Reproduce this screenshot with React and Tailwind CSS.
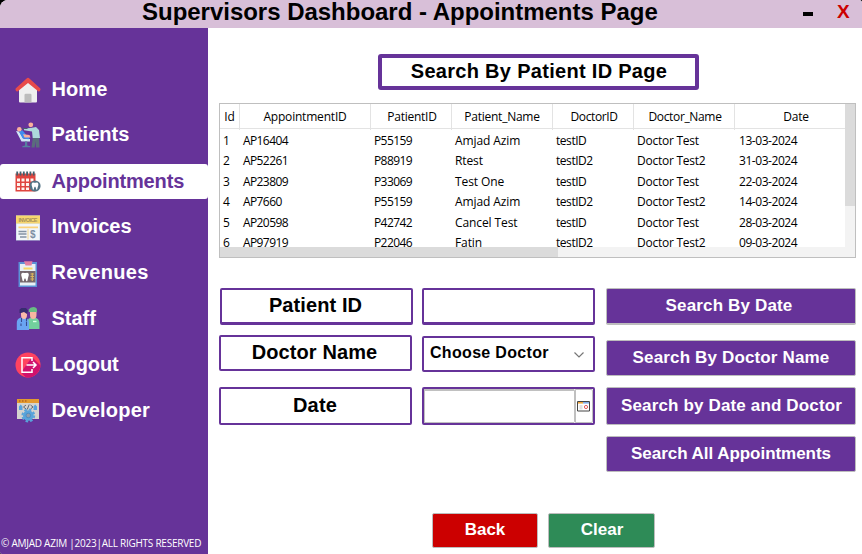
import React from "react";

const HomeIcon = () => (
  <svg viewBox="0 0 26 26" className="h-[26px] w-[26px]">
    <path d="M4 12 13 4l9 8v12.500a1 1 0 0 1-1 1H5a1 1 0 0 1-1-1z" fill="#efefef" />
    <path d="M9.500 25.500V18a1.300 1.300 0 0 1 1.300-1.300h4.400A1.300 1.300 0 0 1 16.500 18v7.500z" fill="#bcbcbc" />
    <path d="M13 .8a2 2 0 0 1 1.400.6l10.700 9.800c1 1-.2 3.800-1.600 3.200L13 6 2.500 14.400C1.100 15-.2 12.200.9 11.200L11.600 1.400A2 2 0 0 1 13 .8z" fill="#e84a4a" />
  </svg>
);

const PatientsIcon = () => (
  <svg viewBox="0 0 26 26" className="h-[26px] w-[26px]">
    <path d="M18 14h6l.5 11.500H21l-.5-6.500-.8 6.500H16.500z" fill="#5a6c7d" />
    <path d="M15.500 6 21 5l3 3 1 8h-7.300L17 9.500l-8-1.200V6.600z" fill="#add8dc" />
    <circle cx="15.800" cy="2.800" r="2.400" fill="#fbb09c" />
    <path d="m1 9 3 .5 4.500 7.200 6.500.3v2.500H6.500z" fill="#cfe8f6" />
    <path d="M4 9.500 7.500 8.300l4 5 3.500 2.500-1.500 1.500-6-1z" fill="#3e8ef0" />
    <path d="m8 12.300 6.500.8 1 2.300-6 .2z" fill="#fbb09c" />
    <circle cx="4.300" cy="7.300" r="2.300" fill="#fbb09c" />
    <path d="M10 19.500h2.200v4l3 .8v1H7.300v-1l2.700-.8z" fill="#56809f" />
    <path d="M7.500 6.500h5" stroke="#48606e" strokeWidth="1" />
  </svg>
);

const AppointmentsIcon = () => (
  <svg viewBox="0 0 26 26" className="h-[26px] w-[26px]">
    <path d="M.5 5.500h20v18H.500z" fill="#e0453f" />
    <path d="M2 10.500h3v3H2zm4.500 0h3v3h-3zm4.500 0h3v3h-3zm4.500 0h3v3h-3zM2 15h3v3H2zm4.500 0h3v3h-3zm4.500 0h3v3h-3zM2 19.500h3v2.500H2zm4.500 0h3v2.500h-3zm4.500 0h3v2.500h-3z" fill="#fff4ef" />
    <path d="M2.200 3.500v4M5.500 3.500v4M8.800 3.500v4M12.100 3.500v4M15.400 3.500v4M18.700 3.500v4" stroke="#41616f" strokeWidth="1.800" />
    <circle cx="20" cy="18" r="5.600" fill="#527384" />
    <path d="M16.800 15.500c.8-1.800 2.200-.8 3.200-.7 1-.1 2.400-1.100 3.200.7.700 1.800-.6 3.200-.8 5-.2 1.800-1.100 1.700-1.400 0-.2-1.200-.5-1.700-1-1.700s-.8.500-1 1.700c-.3 1.700-1.200 1.800-1.400 0-.2-1.800-1.500-3.200-.8-5z" fill="#fff" />
  </svg>
);

const InvoiceIcon = () => (
  <svg viewBox="0 0 26 26" className="h-[26px] w-[26px]">
    <path d="M1 .5h24v25H1z" fill="#bfd3e6" />
    <path d="M1.500 8.500h23V25h-23z" fill="#f2f6f9" />
    <path d="M1 .5h24v8H1z" fill="#f7d66f" />
    <text x="13" y="6.800" textAnchor="middle" textLength="19" className="fill-[#a79259] font-['Liberation_Sans'] text-[5.500px] font-bold">INVOICE</text>
    <path d="M3.500 11.500h19.500v1.800H3.500z" fill="#fbd27a" />
    <path d="M3.500 16.500h8M3.500 19h8M5 22h6.500" stroke="#8393a3" strokeWidth="1.300" />
    <path d="M13 14v10.500" stroke="#f2d68b" strokeWidth="1" />
    <text x="17.800" y="22.500" textAnchor="middle" className="fill-[#7c8fa3] font-['Liberation_Sans'] text-[10px]">$</text>
  </svg>
);

const RevenuesIcon = () => (
  <svg viewBox="0 0 26 26" className="h-[26px] w-[26px]">
    <path d="M3.500 1h18.500v25H3.500z" fill="#5b91d6" />
    <path d="M5 3h15.500v21.500H5z" fill="#e9f0f5" />
    <path d="M9 .3h8.500L16.500 4.500h-6z" fill="#e27ea2" />
    <path d="M8.500 6.500h9v2h-9z" fill="#f8d764" />
    <path d="M5 10h15.500v11.500H5z" fill="#75676d" />
    <path d="M6.500 12.500c1-1.500 2.500-.5 3.500-.5s2.500-1 3.500.5-.5 3.500-.7 5.500c-.3 2.900-1.600 2.900-1.900 1-.2-1.200-.4-1.600-.9-1.600s-.7.400-.9 1.600c-.3 1.900-1.600 1.900-1.900-1-.2-2-1.600-4-.7-5.500z" fill="#fff" />
    <path d="M15.500 13h3.500M15.500 15.500h3.500M15.500 18h3.500M17.300 12v8" stroke="#d9b35d" strokeWidth="1.200" />
  </svg>
);

const StaffIcon = () => (
  <svg viewBox="0 0 26 26" className="h-[26px] w-[26px]">
    <path d="M13 13.500c1-1.500 3-2 5-2 4 0 6.500 2 6.500 6V23H13z" fill="#72cf9d" />
    <path d="M15 4.500h6.500V9q0 4-3.300 4T15 9z" fill="#f6b6a0" />
    <path d="M13.800 6V3.500Q15 1 18.300 1T22 3.500V6z" fill="#68bd83" />
    <path d="M1.800 24v-7c0-4 2.500-5.500 6-5.500s6.200 1.500 6.200 5.500v7z" fill="#6aa5f3" />
    <path d="M6 5h6v4q0 4-3 4t-3-4z" fill="#fbbbaa" />
    <path d="M4.500 7V3.500L6.500 2H11l2 2.500-1 3.500-3-2-3 1z" fill="#382c70" />
    <path d="M6.500 12v4m5-4v3.500M6 17.500V20m5.500-4v4" stroke="#394b91" strokeWidth="1.100" />
    <path d="M18 15.500h3.500" stroke="#d9ffe6" strokeWidth="1.400" />
  </svg>
);

const LogoutIcon = () => (
  <svg viewBox="0 0 26 26" className="h-[26px] w-[26px]">
    <circle cx="13" cy="13" r="12.500" fill="#ff4360" />
    <path d="m6 20.500 5 5c7 1 14-4.500 14.500-12L17 5z" fill="#d0126d" />
    <path d="M17 9V5.800H7v14.400h10V17M11.500 13h9.500m-3-3 3 3-3 3" fill="none" stroke="#fff" strokeWidth="1.500" />
  </svg>
);

const DeveloperIcon = () => (
  <svg viewBox="0 0 26 26" className="h-[26px] w-[26px]">
    <path d="M2 1h22v20H2z" fill="#d4d3cf" />
    <path d="M2 1h22v4H2z" fill="#e39a2f" />
    <path d="M4 3h1.500m1.500 0h1.500M10 3h1.500" stroke="#9b4b1d" />
    <path d="m11 7-2.500 2L11 11m4.500-4L18 9l-2.500 2m-1.300-4.500-2 5" fill="none" stroke="#606773" strokeWidth="1" />
    <path d="M4 8.500 5.700 6.500l1.800 2V12H4zm14.500 0 1.700-2 1.800 2V12h-3.500z" fill="#56a3df" />
    <circle cx="13.300" cy="17.500" r="5.300" fill="#58a4da" />
    <circle cx="13.300" cy="17.500" r="5.900" fill="none" stroke="#58a4da" strokeWidth="2" strokeDasharray="2.600 2" />
    <circle cx="13.300" cy="17.500" r="2.300" fill="#8f9dae" stroke="#3f86c0" strokeWidth=".7" />
  </svg>
);

const menu = [
  { label: "Home", Icon: HomeIcon, text: "tracking-[0.1px]", icon: "pb-0" },
  { label: "Patients", Icon: PatientsIcon, text: "pb-[2px]", icon: "pb-0" },
  { label: "Appointments", Icon: AppointmentsIcon, text: "tracking-[-0.15px]", icon: "pb-0", active: true },
  { label: "Invoices", Icon: InvoiceIcon, text: "", icon: "pt-[2px]" },
  { label: "Revenues", Icon: RevenuesIcon, text: "tracking-[0.35px]", icon: "pt-[2px]" },
  { label: "Staff", Icon: StaffIcon, text: "", icon: "pt-[2px]" },
  { label: "Logout", Icon: LogoutIcon, text: "tracking-[-0.1px]", icon: "pt-[2px]" },
  { label: "Developer", Icon: DeveloperIcon, text: "tracking-[0.2px]", icon: "pt-[2px]" },
];

const columns = [
  { title: "Id", cell: "tracking-[-0.3px]", head: "" },
  { title: "AppointmentID", cell: "tracking-[-0.6px]", head: "tracking-[-0.2px]" },
  { title: "PatientID", cell: "tracking-[-0.6px]", head: "tracking-[-0.25px] pl-[2px]" },
  { title: "Patient_Name", cell: "tracking-[-0.1px]", head: "tracking-[-0.25px]" },
  { title: "DoctorID", cell: "tracking-[-0.45px]", head: "tracking-[-0.4px] pl-[2px]" },
  { title: "Doctor_Name", cell: "tracking-[-0.25px]", head: "tracking-[-0.35px] pl-[2px]" },
  { title: "Date", cell: "tracking-[-0.45px] ml-px", head: "tracking-[-0.2px] pl-3" },
];

const rows = [
  ["1", "AP16404", "P55159", "Amjad Azim", "testID", "Doctor Test", "13-03-2024"],
  ["2", "AP52261", "P88919", "Rtest", "testID2", "Doctor Test2", "31-03-2024"],
  ["3", "AP23809", "P33069", "Test One", "testID", "Doctor Test", "22-03-2024"],
  ["4", "AP7660", "P55159", "Amjad Azim", "testID2", "Doctor Test2", "14-03-2024"],
  ["5", "AP20598", "P42742", "Cancel Test", "testID", "Doctor Test", "28-03-2024"],
  ["6", "AP97919", "P22046", "Fatin", "testID2", "Doctor Test2", "09-03-2024"],
];

const gridCols = "grid grid-cols-[20px_131px_81px_101px_81px_101px_110px]";

function Sidebar() {
  return (
    <aside className="flex w-[208px] shrink-0 flex-col bg-[#663399] pt-11">
      <nav className="flex flex-col gap-[10.8px]">
        {menu.map(({ label, Icon, text, icon, active }) => (
          <a
            key={label}
            className={`flex h-[35px] items-center gap-[11px] rounded-[3px] pl-[14.500px] text-xl font-bold ${
              active ? "bg-white text-[#663399]" : "text-white"
            }`}
          >
            <span className={icon}><Icon /></span>
            <span className={`leading-[35px] ${text}`}>{label}</span>
          </a>
        ))}
      </nav>
      <p className="mt-auto h-[19px] whitespace-pre pl-px font-['Open_Sans',sans-serif] text-[10px] leading-[16px] tracking-[-0.25px] text-white">
        © AMJAD AZIM |2023|ALL RIGHTS RESERVED
      </p>
    </aside>
  );
}

function AppointmentsTable() {
  return (
    <div className="ml-[11px] mt-[13px] flex h-[155px] w-[637px] flex-col border border-[#bfbfbf] font-['Open_Sans',sans-serif] text-xs text-black">
      <div className="flex h-[143px]">
        <div className="w-[625px] overflow-hidden">
          <div className={`${gridCols} h-[25px] border-b border-[#e3e3e3]`}>
            {columns.map((c) => (
              <div
                key={c.title}
                className={`whitespace-nowrap border-r border-[#e3e3e3] text-center leading-[26px] last:border-r-0 ${c.head}`}
              >
                {c.title}
              </div>
            ))}
          </div>
          <div className="pt-[2px]">
            {rows.map((row) => (
              <div key={row[0]} className={`${gridCols} h-[20.400px] leading-[20px]`}>
                {row.map((value, i) => (
                  <div key={i} className={`whitespace-nowrap pl-[3px] ${columns[i].cell}`}>{value}</div>
                ))}
              </div>
            ))}
          </div>
        </div>
        <div className="w-[10px] bg-[#f3f3f3]">
          <div className="h-[102px] bg-[#dbdbdb]" />
        </div>
      </div>
      <div className="h-[10px] bg-[#f3f3f3]">
        <div className="h-full w-[338px] bg-[#dbdbdb]" />
      </div>
    </div>
  );
}

const field = "rounded-[2px] border-2 border-[#663399] bg-white";
const action =
  "flex justify-center rounded-[2px] border border-[#bdbdbd] bg-[#663399] text-[17px] font-bold text-white";

function CalendarIcon() {
  return (
    <svg viewBox="0 0 13 11" className="h-[11px] w-[13px] shrink-0">
      <path d="M.5.5h12v9.500H.500z" fill="#fff" stroke="#444" />
      <path d="M1 1h5v1.600H1z" fill="#f0a63c" />
      <path d="M6 1h6v1.600H6z" fill="#83ace6" />
      <path d="M2.500 4h3v4.500h-3z" fill="#e1e1e1" />
      <circle cx="9" cy="6" r="1.600" fill="#fff" stroke="#e2595c" />
    </svg>
  );
}

export default function App() {
  return (
    <div className="h-[554px] w-[862px] overflow-hidden bg-black font-['Liberation_Sans',Arial,sans-serif]">
      <div className="flex h-full flex-col overflow-hidden rounded-bl-[2px] rounded-tl-[8px] rounded-tr-[3px] bg-white">
        <header className="flex h-7 shrink-0 items-start bg-[#D8BFD8] pl-[142px] font-bold">
          <h1 className="w-[661px] whitespace-nowrap text-2xl leading-[24px] tracking-[-0.02px] text-black">
            Supervisors Dashboard - Appointments Page
          </h1>
          <button className="mt-3 h-1 w-[10px] bg-black" aria-label="Minimize" />
          <button className="ml-[24px] text-[19px] leading-[23px] text-[#CC0000]">X</button>
        </header>
        <div className="flex flex-1">
          <Sidebar />
          <main className="flex flex-1 flex-col pt-[26px] text-black">
            <h2 className="ml-[170px] h-9 w-[321px] whitespace-nowrap rounded-[3px] border-4 border-[#663399] pl-px text-center text-xl font-bold leading-[27px] tracking-[0.3px]">
              Search By Patient ID Page
            </h2>
            <AppointmentsTable />
            <div className="ml-[11px] mt-[30px] flex h-[184px] text-center text-xl font-bold">
              <div className="w-[203px]">
                <div className={`${field} ml-px h-[37px] w-[193px] border-b-[3px] pr-[2px] leading-[31px] tracking-[0.1px]`}>Patient ID</div>
                <div className={`${field} mt-[10px] h-9 w-[193px] pr-[2px] leading-[30px] tracking-[0.1px]`}>Doctor Name</div>
                <div className={`${field} mt-4 h-[38px] w-[193px] pr-px leading-[32px] tracking-[0.2px]`}>Date</div>
              </div>
              <div className="w-[184px]">
                <div className={`${field} h-[37px] w-[173px] border-b-[3px]`} />
                <div className={`${field} mt-[11px] flex h-9 w-[173px] items-center justify-between pl-[6px] pr-[9px] text-base tracking-[0.32px]`}>
                  <span className="pb-[2px]">Choose Doctor</span>
                  <svg viewBox="0 0 10 6" className="mt-px h-[6px] w-[10px]">
                    <path d="m.5.5 4.500 4.500L9.500.5" fill="none" stroke="#777" strokeWidth="1.200" />
                  </svg>
                </div>
                <div className={`${field} mt-[15px] flex h-[38px] w-[173px]`}>
                  <div className="w-[150px] border-b border-l border-t-2 border-[#c0c0c0]" />
                  <div className="flex w-[19px] items-center justify-center rounded-[2px] border border-l-2 border-[#c0c0c0] pr-px">
                    <CalendarIcon />
                  </div>
                </div>
              </div>
              <div className="w-[250px]">
                <button className={`${action} h-[37px] w-full border-b-2 pr-[4px] leading-[33px] tracking-[0.15px]`}>Search By Date</button>
                <button className={`${action} mt-[15px] h-9 w-full leading-[33px] tracking-[0.15px]`}>Search By Doctor Name</button>
                <button className={`${action} mt-[11px] h-[38px] w-full pl-px leading-[35px] tracking-[0.15px]`}>Search by Date and Doctor</button>
                <button className={`${action} mt-[11px] h-9 w-full leading-[33px] tracking-[-0.04px]`}>Search All Appointments</button>
              </div>
            </div>
            <div className="ml-[224px] mt-[41px] flex gap-[10px] text-[17px] font-bold leading-[29px] text-white">
              <button className="flex h-[35px] w-[106px] justify-center rounded-[2px] border border-[#bdbdbd] bg-[#CC0000]">
                <span className="pt-px">Back</span>
              </button>
              <button className="flex h-[35px] w-[107px] justify-center rounded-[2px] border border-[#bdbdbd] bg-[#2E8B57] pl-px">
                <span className="pt-px">Clear</span>
              </button>
            </div>
          </main>
        </div>
      </div>
    </div>
  );
}
